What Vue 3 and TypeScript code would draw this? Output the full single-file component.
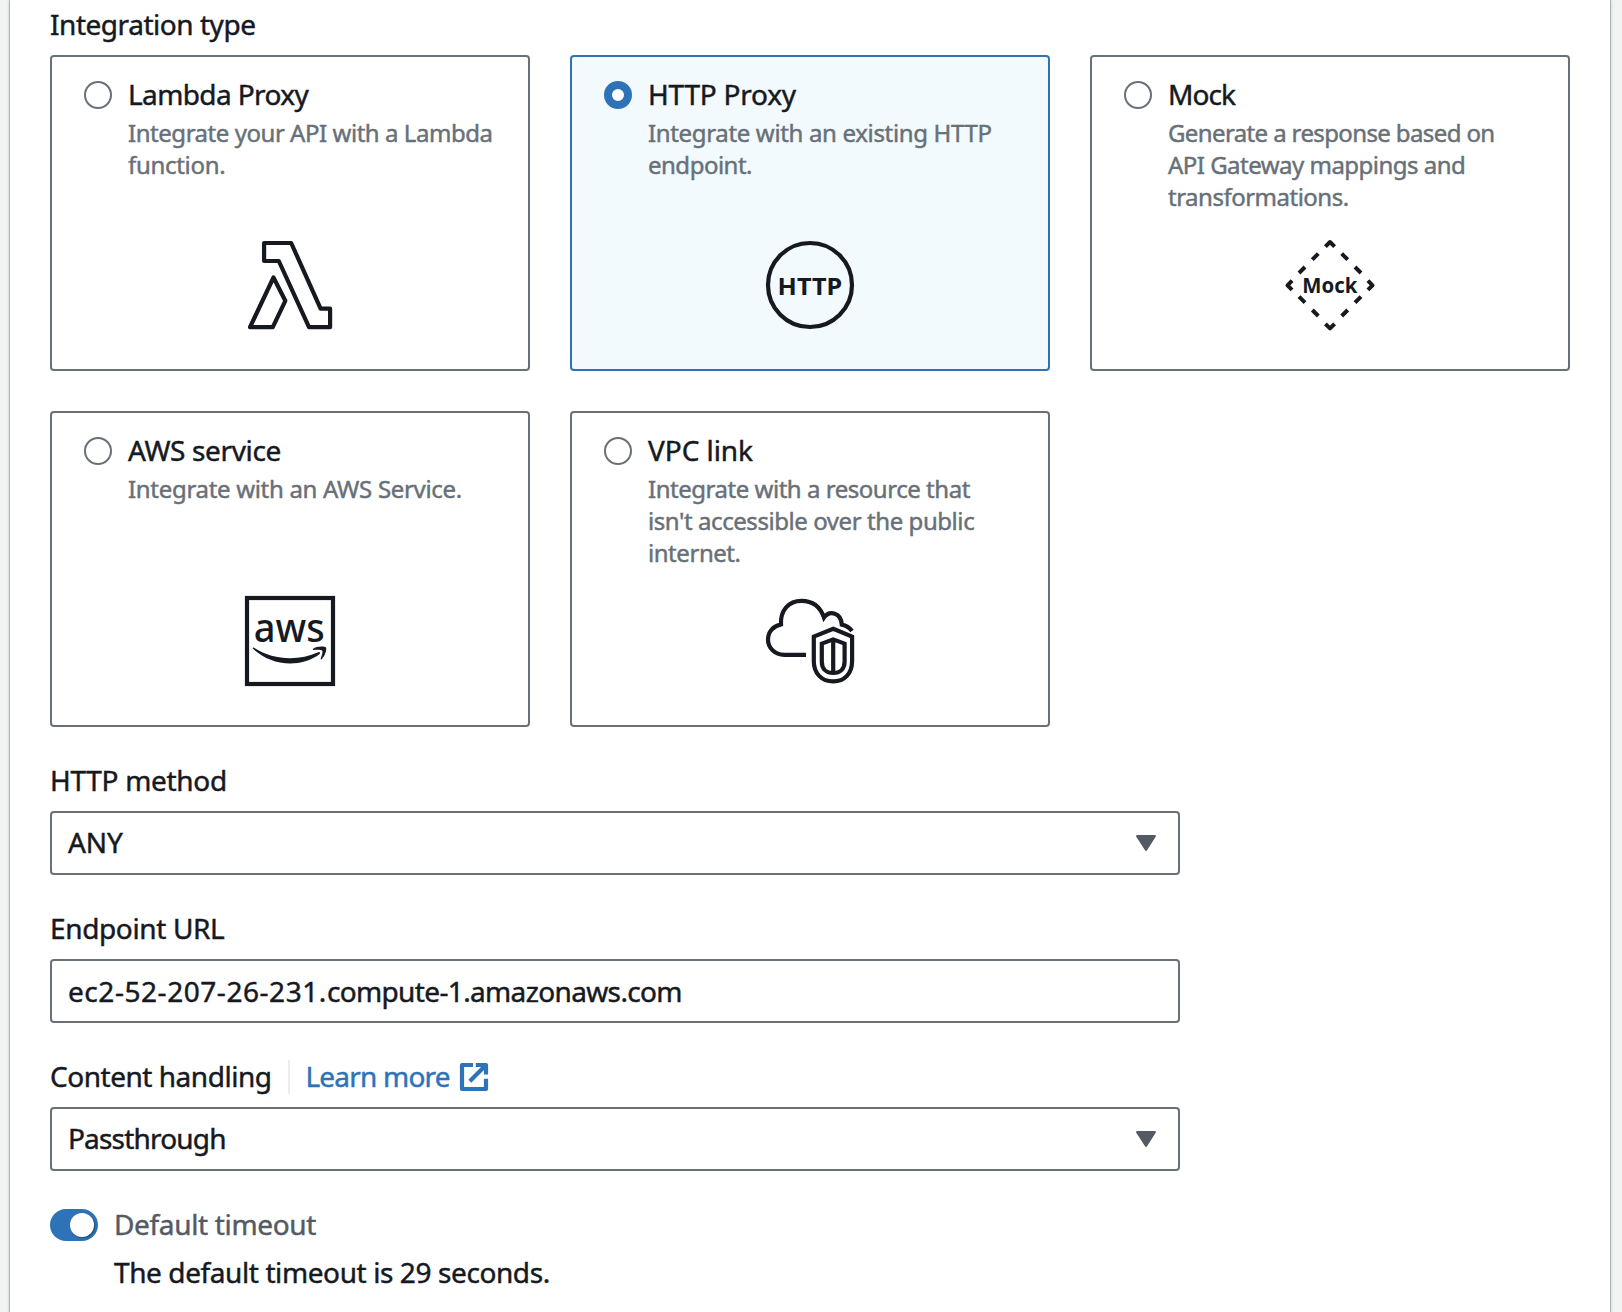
<script setup lang="ts">
import { ref } from 'vue'

interface TextRun {
  text: string
  tracking: number
}

type IconName = 'lambda' | 'http' | 'mock' | 'aws' | 'vpc'

interface IntegrationOption {
  id: IconName
  title: TextRun
  description: TextRun[]
}

const options: IntegrationOption[] = [
  {
    id: 'lambda',
    title: { text: 'Lambda Proxy', tracking: -0.61 },
    description: [
      { text: 'Integrate your API with a Lambda', tracking: -0.46 },
      { text: 'function.', tracking: -0.3 },
    ],
  },
  {
    id: 'http',
    title: { text: 'HTTP Proxy', tracking: -0.23 },
    description: [
      { text: 'Integrate with an existing HTTP', tracking: -0.34 },
      { text: 'endpoint.', tracking: -0.5 },
    ],
  },
  {
    id: 'mock',
    title: { text: 'Mock', tracking: -0.93 },
    description: [
      { text: 'Generate a response based on', tracking: -0.62 },
      { text: 'API Gateway mappings and', tracking: -0.52 },
      { text: 'transformations.', tracking: -0.5 },
    ],
  },
  {
    id: 'aws',
    title: { text: 'AWS service', tracking: -0.36 },
    description: [{ text: 'Integrate with an AWS Service.', tracking: -0.31 }],
  },
  {
    id: 'vpc',
    title: { text: 'VPC link', tracking: -0.05 },
    description: [
      { text: 'Integrate with a resource that', tracking: -0.47 },
      { text: "isn't accessible over the public", tracking: -0.43 },
      { text: 'internet.', tracking: -0.45 },
    ],
  },
]

const selected = ref<IconName>('http')
const defaultTimeout = ref(true)

const spacing = (run: TextRun) => ({ letterSpacing: `${run.tracking}px` })

const labels = {
  type: { text: 'Integration type', tracking: -0.46 },
  method: { text: 'HTTP method', tracking: -0.3 },
  endpoint: { text: 'Endpoint URL', tracking: -0.36 },
  content: { text: 'Content handling', tracking: -0.47 },
  learn: { text: 'Learn more', tracking: -0.8 },
  timeout: { text: 'Default timeout', tracking: -0.34 },
  timeoutInfo: { text: 'The default timeout is 29 seconds.', tracking: -0.4 },
}

const values = {
  method: { text: 'ANY', tracking: -0.09 },
  endpoint: [
    { text: 'ec2-52-207-26-231.', tracking: 0.55 },
    { text: 'compute-1.amazonaws.com', tracking: -0.64 },
  ],
  content: { text: 'Passthrough', tracking: -0.82 },
}
</script>

<template>
  <div class="page">
    <main class="panel">
      <div class="label" :style="spacing(labels.type)">{{ labels.type.text }}</div>
      <div class="cards" role="radiogroup">
        <div
          v-for="option in options"
          :key="option.id"
          class="card"
          :class="{ selected: selected === option.id }"
          role="radio"
          :aria-checked="selected === option.id"
          @click="selected = option.id"
        >
          <div class="card-head">
            <span class="radio"></span>
            <div class="card-text">
              <div class="card-title" :style="spacing(option.title)">{{ option.title.text }}</div>
              <div
                v-for="line in option.description"
                :key="line.text"
                class="card-line"
                :style="spacing(line)"
              >{{ line.text }}</div>
            </div>
          </div>
          <svg class="card-icon" viewBox="0 0 120 120" width="120" height="120">
            <g v-if="option.id === 'lambda'" class="stroke">
              <path d="M34.1 18H61.2L90.6 83.7H100.1V102.2H79L48.8 36H34.1Z" />
              <path d="M43.5 52.5L55.3 75.8L42.8 102.2H20Z" />
            </g>
            <g v-else-if="option.id === 'http'">
              <circle class="stroke" cx="60" cy="60" r="42" />
              <text
                class="bold"
                x="27.6"
                y="69.7"
                font-size="24"
                textLength="64.6"
                lengthAdjust="spacingAndGlyphs"
              >HTTP</text>
            </g>
            <g v-else-if="option.id === 'mock'">
              <g class="stroke dash">
                <path d="M55.4 21.6L60 17L64.6 21.6" />
                <path d="M97.9 55.7L102.5 60.3L97.9 64.9" />
                <path d="M64.6 98.8L60 103.4L55.4 98.8" />
                <path d="M22.1 64.9L17.5 60.3L22.1 55.7" />
                <path d="M48.3 28.7L42.3 34.7M35 42L29 48" />
                <path d="M71.7 28.7L77.7 34.7M85 42L91 48" />
                <path d="M29 71.7L35 77.7M42.3 85L48.3 91" />
                <path d="M91 71.7L85 77.7M77.7 85L71.7 91" />
              </g>
              <text
                class="bold"
                x="32.3"
                y="68"
                font-size="21.6"
                textLength="55"
                lengthAdjust="spacingAndGlyphs"
              >Mock</text>
            </g>
            <g v-else-if="option.id === 'aws'">
              <rect class="stroke square" x="17" y="17" width="86" height="86" />
              <text
                class="logo"
                x="23.8"
                y="61.4"
                font-size="40"
                textLength="71"
                lengthAdjust="spacingAndGlyphs"
              >aws</text>
              <path
                class="solid"
                d="M23.6 66.6C35 74.2 47.5 77.2 60 77.2C70 77.2 79.5 75 88.2 71.2C89.8 70.6 90.7 72.2 89.4 73.2C81 79.4 70 82.4 60.3 82.4C46 82.4 33.2 77 23 67.8C22.4 67.1 22.8 66.2 23.6 66.6Z"
              />
              <path
                class="solid"
                d="M83 67.9C86.4 65 94.4 65 96 66.6C97 68.6 95.2 75 91.6 78.2C91 78.7 90.4 78.4 90.7 77.6C91.8 74.8 93 70.6 92.3 69.7C91.3 68.6 87.2 68.7 83.6 69C82.8 69.1 82.6 68.4 83 67.9Z"
              />
            </g>
            <g v-else class="stroke square">
              <path
                d="M56 73.8H34.2C24.8 73.8 18 67 18 58.6C18 50.8 23.4 45 31 43.4C30.2 29.4 38.6 19.8 51.5 19.8C62.4 19.8 70.4 26 74 36.6C79.6 28.8 91.2 31.8 91.8 43.6C96.2 44.4 99.4 46.4 102 50"
              />
              <path d="M83.2 47.8L102.1 55.6V80C102.1 92.4 94.6 100.4 83.2 100.4C71.6 100.4 63.8 92.4 63.8 80V55.6Z" />
              <path d="M83.2 58.4L94.6 62.6V80.4C94.6 88 90 92 83.2 92C76.4 92 71.8 88 71.8 80.4V62.6ZM83.2 58.4V92" />
            </g>
          </svg>
        </div>
      </div>

      <div class="field">
        <div class="label" :style="spacing(labels.method)">{{ labels.method.text }}</div>
        <div class="control">
          <span :style="spacing(values.method)">{{ values.method.text }}</span>
          <svg class="caret" width="20" height="16" viewBox="0 0 20 16">
            <path d="M1.1 1.1H18.9L10 14.9Z" />
          </svg>
        </div>
      </div>

      <div class="field">
        <div class="label" :style="spacing(labels.endpoint)">{{ labels.endpoint.text }}</div>
        <div class="control">
          <div><span v-for="run in values.endpoint" :key="run.text" :style="spacing(run)">{{ run.text }}</span></div>
        </div>
      </div>

      <div class="field">
        <div class="label-row">
          <div class="label" :style="spacing(labels.content)">{{ labels.content.text }}</div>
          <a class="learn">
            <span :style="spacing(labels.learn)">{{ labels.learn.text }}</span>
            <svg class="external" width="32" height="32" viewBox="0 0 16 16">
              <path d="M7.5 2H2V14H14V8.9" />
              <path d="M8.9 2H14V6.8" />
              <path class="arrow" d="M5.9 10.1L14 2" />
            </svg>
          </a>
        </div>
        <div class="control">
          <span :style="spacing(values.content)">{{ values.content.text }}</span>
          <svg class="caret" width="20" height="16" viewBox="0 0 20 16">
            <path d="M1.1 1.1H18.9L10 14.9Z" />
          </svg>
        </div>
      </div>

      <div class="timeout">
        <span
          class="toggle"
          :class="{ on: defaultTimeout }"
          role="switch"
          :aria-checked="defaultTimeout"
          @click="defaultTimeout = !defaultTimeout"
        ><span class="thumb"></span></span>
        <div class="timeout-text">
          <div class="timeout-label" :style="spacing(labels.timeout)">{{ labels.timeout.text }}</div>
          <div :style="spacing(labels.timeoutInfo)">{{ labels.timeoutInfo.text }}</div>
        </div>
      </div>
    </main>
  </div>
</template>

<style>
body {
  margin: 0;
  background: #f2f3f3;
}
</style>

<style scoped>
.page {
  box-sizing: border-box;
  width: 1622px;
  height: 1312px;
  padding: 0 12px 0 10px;
  overflow: hidden;
  background: #f2f3f3;
  color: #16191f;
  font-family: 'Noto Sans', 'Open Sans', sans-serif;
  font-size: 28px;
  line-height: 44px;
  -webkit-text-stroke: 0.45px currentColor;
  white-space: nowrap;
}

.panel {
  box-sizing: border-box;
  height: 1340px;
  padding: 2px 40px 0;
  background: #fff;
  box-shadow:
    0 0 0 1px rgba(0, 28, 36, 0.2),
    -1px 0 3px rgba(0, 28, 36, 0.15),
    1px 0 3px rgba(0, 28, 36, 0.15);
}

.label {
  height: 44px;
}

.cards {
  display: grid;
  grid-template-columns: repeat(3, 480px);
  grid-auto-rows: 316px;
  gap: 40px;
  margin-top: 9px;
}

.card {
  box-sizing: border-box;
  display: flex;
  flex-direction: column;
  justify-content: space-between;
  padding: 15px 32px 24px;
  border: 2px solid #687078;
  border-radius: 4px;
  background: #fff;
}

.card.selected {
  border-color: #2e73b8;
  background: #f2fafd;
}

.card-head {
  display: flex;
  gap: 16px;
  height: 0;
}

.radio {
  box-sizing: border-box;
  flex: none;
  width: 28px;
  height: 28px;
  margin-top: 9px;
  border: 2px solid #687078;
  border-radius: 50%;
  background: #fff;
}

.selected .radio {
  border: 8px solid #2e73b8;
}

.card-title {
  height: 45px;
}

.card-line {
  height: 32px;
  color: #687078;
  font-size: 24px;
  line-height: 32px;
}

.card-icon {
  display: block;
  align-self: center;
}

.card-icon text {
  fill: #16191f;
  stroke: none;
  -webkit-text-stroke: 0;
  letter-spacing: 0;
}

.bold {
  font-weight: 700;
}

.card-icon .logo {
  font-weight: 500;
}

.stroke {
  fill: none;
  stroke: #16191f;
  stroke-width: 4.2;
  stroke-linejoin: round;
}

.square {
  stroke-linejoin: miter;
}

.dash {
  stroke-width: 4;
}

.solid {
  fill: #16191f;
}

.field {
  width: 1130px;
  margin-top: 31px;
}

.control {
  box-sizing: border-box;
  display: flex;
  align-items: center;
  justify-content: space-between;
  height: 64px;
  margin-top: 9px;
  padding: 0 22px 0 16px;
  border: 2px solid #687078;
  border-radius: 4px;
  background: #fff;
}

.control > span {
  margin-top: -2px;
}

.caret path {
  fill: #545b64;
  stroke: #545b64;
  stroke-width: 2;
  stroke-linejoin: round;
}

.label-row {
  display: flex;
  align-items: flex-start;
}

.label-row .label {
  width: 238px;
}

.learn {
  display: flex;
  height: 34px;
  margin-top: 6px;
  padding-left: 15.5px;
  border-left: 2px solid #eaeded;
  color: #2e73b8;
}

.learn span {
  width: 152.5px;
  margin-top: -6px;
}

.external {
  margin-top: 1px;
  fill: none;
  stroke: currentColor;
  stroke-width: 2.1;
  stroke-linejoin: round;
}

.timeout {
  display: flex;
  gap: 16px;
  margin-top: 31px;
}

.toggle {
  box-sizing: border-box;
  width: 48px;
  height: 32px;
  margin-top: 7px;
  padding: 4px;
  border-radius: 16px;
  background: #687078;
}

.toggle.on {
  padding-left: 20px;
  background: #2e73b8;
}

.thumb {
  display: block;
  width: 24px;
  height: 24px;
  border-radius: 50%;
  background: #fff;
  box-shadow: 1px 1px 2px rgba(0, 0, 0, 0.35);
}

.timeout-label {
  height: 48px;
  color: #545b64;
}
</style>
